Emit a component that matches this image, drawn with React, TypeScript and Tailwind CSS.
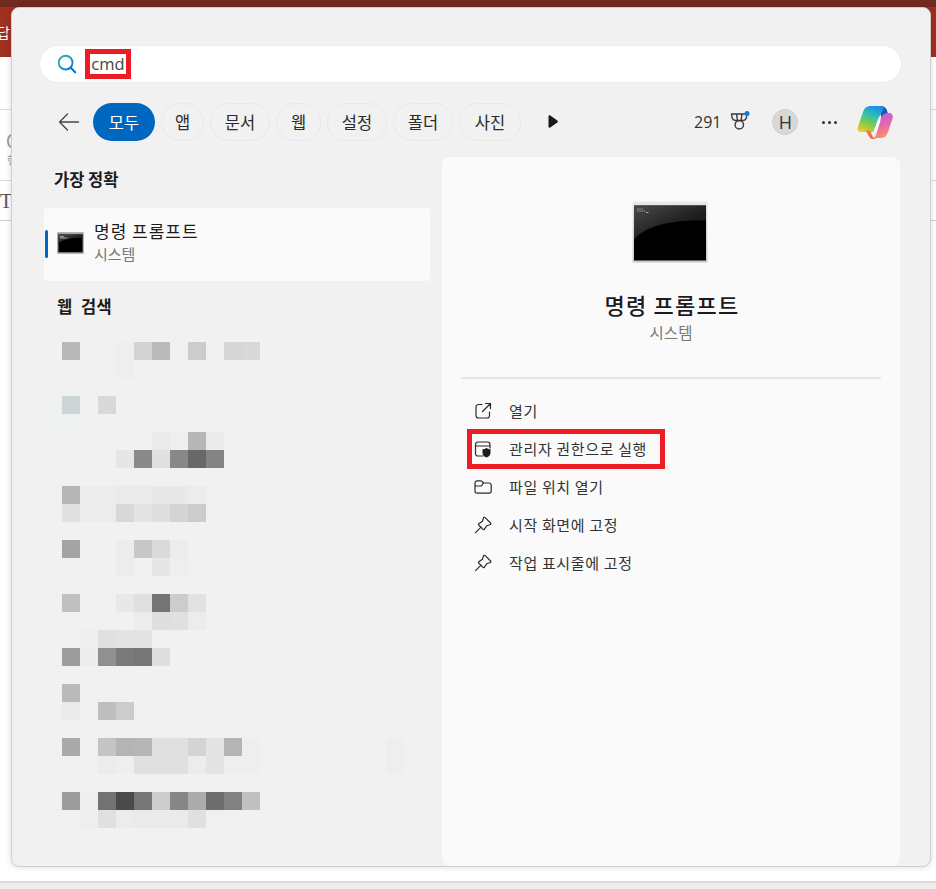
import React from "react";

type Cell = [number, string];
const blur: { y: number; cells: Cell[] }[] = [
  { y: 0, cells: [[1,"#b8b8b8"],[4,"#eeeeee"],[5,"#d2d2d2"],[6,"#bbbbbb"],[7,"#f0f0f0"],[8,"#cccccc"],[10,"#d6d6d6"],[11,"#d8d8d8"]] },
  { y: 1, cells: [[4,"#eeeeee"],[5,"#f1f1f1"],[6,"#f0f0f0"],[11,"#f0f0f0"]] },
  { y: 3, cells: [[0,"#f0f2f1"],[1,"#ccd6d6"],[3,"#d9d9d9"]] },
  { y: 4, cells: [[0,"#f0f2f1"],[1,"#eff1f0"]] },
  { y: 5, cells: [[6,"#eaeaea"],[7,"#eeeeee"],[8,"#b6b6b6"],[9,"#eaeaea"]] },
  { y: 6, cells: [[1,"#f0f0f0"],[3,"#f1f1f1"],[4,"#e6e6e6"],[5,"#8a8a8a"],[6,"#e0e0e0"],[7,"#888888"],[8,"#686868"],[9,"#848484"]] },
  { y: 8, cells: [[0,"#f0f0f0"],[1,"#b6b6b6"],[2,"#ececec"],[3,"#ececec"],[4,"#eaeaea"],[5,"#eaeaea"],[6,"#e8e8e8"],[7,"#e8e8e8"],[8,"#ececec"],[19,"#f0f0f0"]] },
  { y: 9, cells: [[0,"#f0f0f0"],[1,"#e0e0e0"],[2,"#ececec"],[3,"#ececec"],[4,"#d8d8d8"],[5,"#e4e4e4"],[6,"#dedede"],[7,"#d4d4d4"],[8,"#cccccc"],[19,"#f0f0f0"]] },
  { y: 11, cells: [[1,"#a4a4a4"],[4,"#ececec"],[5,"#c8c8c8"],[6,"#dadada"],[7,"#ececec"],[19,"#f0f0f0"]] },
  { y: 12, cells: [[4,"#ececec"],[6,"#e6e6e6"],[7,"#eeeeee"],[19,"#f0f0f0"]] },
  { y: 14, cells: [[1,"#c0c0c0"],[4,"#e8e8e8"],[5,"#e0e0e0"],[6,"#747474"],[7,"#cccccc"],[8,"#e2e2e2"]] },
  { y: 15, cells: [[5,"#ececec"],[6,"#dedede"],[7,"#e0e0e0"],[8,"#ececec"]] },
  { y: 16, cells: [[2,"#eeeeee"],[3,"#e0e0e0"],[4,"#e4e4e4"],[5,"#e4e4e4"],[6,"#f0f0f0"]] },
  { y: 17, cells: [[1,"#9c9c9c"],[2,"#ececec"],[3,"#909090"],[4,"#7a7a7a"],[5,"#767676"],[6,"#dedede"]] },
  { y: 19, cells: [[0,"#f1f1f1"],[1,"#bababa"],[2,"#f0f0f0"],[3,"#f1f1f1"]] },
  { y: 20, cells: [[0,"#f1f1f1"],[1,"#eaeaea"],[2,"#f0f0f0"],[3,"#bebebe"],[4,"#cccccc"]] },
  { y: 22, cells: [[1,"#aaaaaa"],[2,"#f0f0f0"],[3,"#c4c4c4"],[4,"#b4b4b4"],[5,"#b6b6b6"],[6,"#e0e0e0"],[7,"#e0e0e0"],[8,"#d4d4d4"],[9,"#e4e4e4"],[10,"#b4b4b4"],[11,"#eeeeee"],[19,"#eeeeee"],[20,"#f1f1f1"]] },
  { y: 23, cells: [[1,"#f0f0f0"],[2,"#f0f0f0"],[3,"#ececec"],[4,"#eeeeee"],[5,"#e0e0e0"],[6,"#e0e0e0"],[7,"#e0e0e0"],[8,"#ececec"],[9,"#e4e4e4"],[10,"#eeeeee"],[11,"#eeeeee"],[19,"#eeeeee"],[20,"#f1f1f1"]] },
  { y: 25, cells: [[1,"#9c9c9c"],[2,"#eeeeee"],[3,"#727272"],[4,"#4a4a4a"],[5,"#767676"],[6,"#cccccc"],[7,"#868686"],[8,"#acacac"],[9,"#6e6e6e"],[10,"#828282"],[11,"#c0c0c0"]] },
  { y: 26, cells: [[2,"#eeeeee"],[3,"#e0e0e0"],[4,"#ececec"],[5,"#eaeaea"],[6,"#eaeaea"],[7,"#eaeaea"],[8,"#e0e0e0"],[9,"#f0f0f0"]] },
];

const ko = "font-['Noto_Sans_CJK_KR','Noto_Sans',sans-serif]";

function Pill({ label, w, active }: { label: string; w: string; active?: boolean }) {
  return (
    <div
      className={`${w} h-[38px] shrink-0 flex items-center justify-center rounded-full text-[16.5px] ${
        active ? "bg-[#0067c0] text-white" : "border-[1.5px] border-[#e8e8e8] text-[#2b2b2b]"
      }`}
    >
      {label}
    </div>
  );
}

function CmdIcon({ className, small }: { className: string; small?: boolean }) {
  return (
    <svg viewBox="0 0 76 62" className={className}>
      <defs>
        <linearGradient id="cmdFrame" x1="0" y1="0" x2="0" y2="1">
          <stop offset="0" stopColor="#e6e9ee" />
          <stop offset="1" stopColor="#c3c9d2" />
        </linearGradient>
        <linearGradient id="cmdGlow" x1="0" y1="0" x2="1" y2="1">
          <stop offset="0" stopColor="#4a4a4a" />
          <stop offset="0.6" stopColor="#1d1d1d" />
          <stop offset="1" stopColor="#0c0c0c" />
        </linearGradient>
      </defs>
      <rect x="0.5" y="0.5" width="75" height="61" rx="1" fill={small ? "#9aa0a8" : "url(#cmdFrame)"} />
      <rect x={small ? 4 : 2} y={small ? 7 : 4.5} width={small ? 68 : 72} height={small ? 50 : 55} fill="#000" />
      <path d={small ? "M4 7h68v10c-30-1-56 3-68 16z" : "M2 4.5h72v15c-30-1-60 4-72 19z"} fill="url(#cmdGlow)" />
      <path d={small ? "M8 13h12M8 17h22" : "M5 8h6M5 10h9"} stroke="#9a9a9a" strokeWidth={small ? 3 : 1.2} strokeDasharray={small ? "none" : "1.5 .7"} />
      {!small && <path d="M14 11.5h2.5" stroke="#aaa" strokeWidth="1" />}
    </svg>
  );
}

function ActionIcon({ kind }: { kind: string }) {
  const s = { fill: "none", stroke: "#2b2b2b", strokeWidth: 1.2, strokeLinecap: "round" as const, strokeLinejoin: "round" as const };
  return (
    <svg viewBox="0 0 20 20" className="w-5 h-5 shrink-0">
      {kind === "open" && (
        <g {...s}>
          <path d="M9 3.5H5.5a2.5 2.5 0 0 0-2.5 2.5v8.5a2.5 2.5 0 0 0 2.5 2.5H14a2.5 2.5 0 0 0 2.5-2.5V11" />
          <path d="M12.5 2.5h5v5M17.5 2.5 9.5 10.5" />
        </g>
      )}
      {kind === "admin" && (
        <g>
          <path {...s} d="M10 17H5a2.5 2.5 0 0 1-2.5-2.5V5.5A2.5 2.5 0 0 1 5 3h9.5A2.5 2.5 0 0 1 17 5.5V9M2.5 7H17" />
          <path d="M13.5 9c1.4 1 2.6 1.2 4 1.2v3.6c0 2.4-1.6 3.9-4 4.7-2.4-.8-4-2.3-4-4.7v-3.6c1.4 0 2.6-.2 4-1.2z" fill="#1c1c1c" />
        </g>
      )}
      {kind === "folder" && (
        <g {...s}>
          <path d="M2 6a2.2 2.2 0 0 1 2.2-2.2h3.4c.6 0 1 .2 1.4.6L10.4 6H16a2.2 2.2 0 0 1 2.2 2.2V14a2.2 2.2 0 0 1-2.2 2.2H4.2A2.2 2.2 0 0 1 2 14z" />
          <path d="M2 9h5.6c.5 0 .9-.2 1.2-.5L10.4 6" />
        </g>
      )}
      {kind === "pin" && (
        <g {...s}>
          <path d="M12.2 2.6 17.6 8c.5.5.3 1.3-.3 1.5l-3.4 1.2-2.6 3.6c-.3.4-.9.4-1.2.1L5.7 10c-.3-.3-.3-.9.1-1.2l3.6-2.6 1.2-3.4c.2-.6 1-.8 1.6-.2z" />
          <path d="M7.8 12.4 2.5 17.7" />
        </g>
      )}
    </svg>
  );
}

function Copilot() {
  return (
    <svg viewBox="0 0 36 34" className="w-9 h-[34px]">
      <defs>
        <linearGradient id="cpA" x1="0.6" y1="0" x2="0.2" y2="1">
          <stop offset="0" stopColor="#1f8fe6" />
          <stop offset="0.35" stopColor="#2fc3b0" />
          <stop offset="0.65" stopColor="#7ecb4a" />
          <stop offset="1" stopColor="#f2c933" />
        </linearGradient>
        <linearGradient id="cpB" x1="0.4" y1="0" x2="0.7" y2="1">
          <stop offset="0" stopColor="#b45fe0" />
          <stop offset="0.5" stopColor="#e868a8" />
          <stop offset="1" stopColor="#fb9a5c" />
        </linearGradient>
        <linearGradient id="cpC" x1="0" y1="0" x2="1" y2="1">
          <stop offset="0" stopColor="#1c72dc" />
          <stop offset="1" stopColor="#1a3fae" />
        </linearGradient>
        <linearGradient id="cpD" x1="0" y1="1" x2="1" y2="0">
          <stop offset="0" stopColor="#f0573a" />
          <stop offset="1" stopColor="#f79a42" />
        </linearGradient>
      </defs>
      <path d="M18 1h6c3 0 5 1.500 6 4.500l3 9.500-8-1-3-9c-.7-1.600-2-3.500-4-4.500z" fill="url(#cpC)" />
      <path d="M13 1h10c2 0 3.200 1 3.800 2.500L21 14l-4 11.500c-.8 1-1.500 1.500-3 1.500H4c-2.500 0-4-2-3.300-4.500L6 7c1.200-3.700 3.500-6 7-6z" fill="url(#cpA)" />
      <path d="M9 26 13 33c1 .8 2 1 3 1h4c-3-.3-4.300-2-5-4l-2-5z" fill="url(#cpD)" />
      <path d="M24 33h-9c3-.2 3.500-2 4.500-4.500L24 13c1-2.500 2.500-5 7-5h1.500c2.500 0 3.800 2.500 3.200 5L31 27c-1.200 3.800-3.500 6-7 6z" fill="url(#cpB)" />
      <path d="M21 15.500h2.500l-3.700 10.500h-3z" fill="#fdfdfd" />
    </svg>
  );
}

function Medal() {
  return (
    <svg viewBox="0 0 20 20" className="w-5 h-5">
      <g fill="none" stroke="#3a3a3a" strokeWidth="1.4" strokeLinejoin="round">
        <path d="M1.500 3h15.500l-.6 3.500c-.3 1.800-1.800 3-3.500 3H5.600c-1.700 0-3.200-1.200-3.500-3z" />
        <path d="M6.500 3.200 7.500 9.500M12 3.200 11 9.500" />
        <circle cx="9.300" cy="13.800" r="4.200" />
      </g>
      <circle cx="17" cy="2.500" r="2.500" fill="#0a7de6" />
    </svg>
  );
}

export default function App() {
  const row = "h-[38px] ml-[31px] flex items-center gap-[16px]";
  return (
    <div className={`relative w-[936px] h-[889px] overflow-hidden bg-white ${ko}`}>
      {/* page behind the search window */}
      <div className="h-[57px] bg-[#a03020] border-t-[7px] border-[#722a20] text-white text-[14px] leading-[50px] overflow-hidden">
        <span className="ml-[-3px]">답</span>
      </div>
      <div className="h-[53px] border-b border-[#dcdcdc]" />
      <div className="h-[71px] border-b border-[#dcdcdc] text-[#999] pl-[6px] pt-[21px] leading-none">
        <span className="block text-[18px]">C</span>
        <span className="block text-[11px] mt-[6px] ml-[1px]">행</span>
      </div>
      <div className="h-[40px] border-b border-[#cfcfcf] text-[#555] text-[20px] font-['Liberation_Serif',serif] leading-[40px]">T</div>
      <div className="absolute left-0 right-0 top-[881px] h-2 bg-[#eeeeee] border-t-2 border-[#dadada]" />

      {/* search window */}
      <div className="absolute left-[11px] top-[7px] w-[920px] h-[860px] rounded-lg border border-[#cfcfcf] bg-[#f1f1f1] shadow-[0_0_6px_rgba(0,0,0,0.15)] flex flex-col">
        {/* search box */}
        <div className="ml-[27px] mt-[37px] w-[863px] h-[38px] shrink-0 rounded-full bg-white border border-[#ebebeb] flex items-center">
          <svg viewBox="0 0 24 24" className="ml-[16px] w-[22px] h-[22px] shrink-0" fill="none" strokeWidth="2" strokeLinecap="round">
            <defs>
              <linearGradient id="sg" x1="0" y1="0" x2="1" y2="1">
                <stop offset="0" stopColor="#2dbd8f" />
                <stop offset="0.5" stopColor="#1a9bd8" />
                <stop offset="1" stopColor="#0b6cc9" />
              </linearGradient>
            </defs>
            <circle cx="10.500" cy="10.500" r="7.500" stroke="url(#sg)" />
            <path d="M16 16l5 5" stroke="#0b78d0" strokeWidth="2.400" />
          </svg>
          <div className="ml-[7px] w-[46px] h-[30px] border-[5px] border-[#ee1c25] flex items-center justify-center bg-white text-[16.5px] leading-none text-[#444] font-['Open_Sans',sans-serif]">
            cmd
          </div>
        </div>

        {/* filter row */}
        <div className="mt-[20px] h-[38px] shrink-0 flex items-center">
          <svg viewBox="0 0 22 18" className="ml-[46px] w-[22px] h-[18px] shrink-0" fill="none" stroke="#444" strokeWidth="1.300" strokeLinecap="round" strokeLinejoin="round">
            <path d="M20.500 9H1.500M9.500 1 1.500 9l8 8" />
          </svg>
          <div className="ml-[13px] flex gap-[6px]">
            <Pill label="모두" w="w-[62px]" active />
            <Pill label="앱" w="w-[43px]" />
            <Pill label="문서" w="w-[60px]" />
            <Pill label="웹" w="w-[45px]" />
            <Pill label="설정" w="w-[60px]" />
            <Pill label="폴더" w="w-[60px]" />
            <Pill label="사진" w="w-[62px]" />
          </div>
          <svg viewBox="0 0 10 14" className="ml-[27px] w-[10px] h-[14px] shrink-0" fill="#1a1a1a">
            <path d="M0.500 1.500C0.500.500 1.500 0 2.300.500l7 5c.7.500.7 1.500 0 2l-7 5C1.500 13 .5 12.500.5 11.500z" />
          </svg>
          <span className="ml-[136px] text-[16px] text-[#333] font-['Open_Sans',sans-serif]">291</span>
          <span className="ml-[9px] mt-[-2px]"><Medal /></span>
          <div className="ml-[22px] w-[26px] h-[26px] rounded-full bg-[#d8d8d8] border border-[#cfcfcf] flex items-center justify-center text-[18px] text-[#333] font-['Open_Sans',sans-serif]">H</div>
          <div className="ml-[24px] flex gap-[3px]">
            <span className="w-[3px] h-[3px] rounded-full bg-[#333]" />
            <span className="w-[3px] h-[3px] rounded-full bg-[#333]" />
            <span className="w-[3px] h-[3px] rounded-full bg-[#333]" />
          </div>
          <div className="ml-[20px]"><Copilot /></div>
        </div>

        {/* columns */}
        <div className="mt-[16px] flex-1 flex min-h-0">
          {/* results */}
          <div className="relative ml-[32px] w-[387px] shrink-0">
            <div className="ml-[10px] mt-[10px] text-[16.5px] leading-6 font-bold text-[#1c1c1c]">가장 정확</div>
            <div className="relative mt-[17px] w-[386px] h-[73px] bg-[#fafafa] rounded-[4px] flex items-center">
              <span className="absolute left-[1px] top-[22px] w-[3px] h-[28px] rounded-full bg-[#0067c0]" />
              <CmdIcon small className="ml-[13px] mt-[-3px] w-[27px] h-[22px] shrink-0" />
              <div className="ml-[10px] pb-[4px]">
                <div className="text-[17px] leading-[22px] text-[#1c1c1c] tracking-[1px]">명령 프롬프트</div>
                <div className="text-[15px] leading-[24px] text-[#777]">시스템</div>
              </div>
            </div>
            <div className="ml-[13px] mt-[13px] text-[16.5px] leading-6 font-bold text-[#1c1c1c] tracking-[0.5px] [word-spacing:4px]">웹 검색</div>
            {/* pixelated web results */}
            <div className="mt-[24px] grid grid-cols-[repeat(21,18px)] grid-rows-[repeat(27,18px)]">
              {blur.flatMap((r) =>
                r.cells.map(([c, color]) => (
                  <span
                    key={`${r.y}-${c}`}
                    style={{ gridRow: r.y + 1, gridColumn: c + 1, backgroundColor: color }}
                  />
                ))
              )}
            </div>
          </div>

          {/* detail panel */}
          <div className="ml-[11px] w-[458px] rounded-lg bg-[#fafafa] flex flex-col">
            <div className="mt-[44px] flex flex-col items-center">
              <CmdIcon className="w-[76px] h-[62px] mr-[2px]" />
              <div className="mt-[26px] ml-[2px] text-[22px] leading-[30px] font-medium text-[#1c1c1c] tracking-[1.2px]">명령 프롬프트</div>
              <div className="mt-[3px] text-[15.5px] leading-5 text-[#777]">시스템</div>
            </div>
            <div className="mx-[19px] mt-[35px] h-[2px] bg-[#e6e6e6]" />
            <div className="mt-[13px] flex flex-col text-[15px] tracking-[0.65px] text-[#333]">
              <div className={row}><ActionIcon kind="open" /><span>열기</span></div>
              <div className={`relative ${row}`}>
                <span className="absolute left-[-6px] top-[-1px] w-[198px] h-[40px] border-[5px] border-[#ee1c25]" />
                <ActionIcon kind="admin" /><span>관리자 권한으로 실행</span>
              </div>
              <div className={row}><ActionIcon kind="folder" /><span>파일 위치 열기</span></div>
              <div className={row}><ActionIcon kind="pin" /><span>시작 화면에 고정</span></div>
              <div className={row}><ActionIcon kind="pin" /><span>작업 표시줄에 고정</span></div>
            </div>
          </div>
        </div>
      </div>
    </div>
  );
}
